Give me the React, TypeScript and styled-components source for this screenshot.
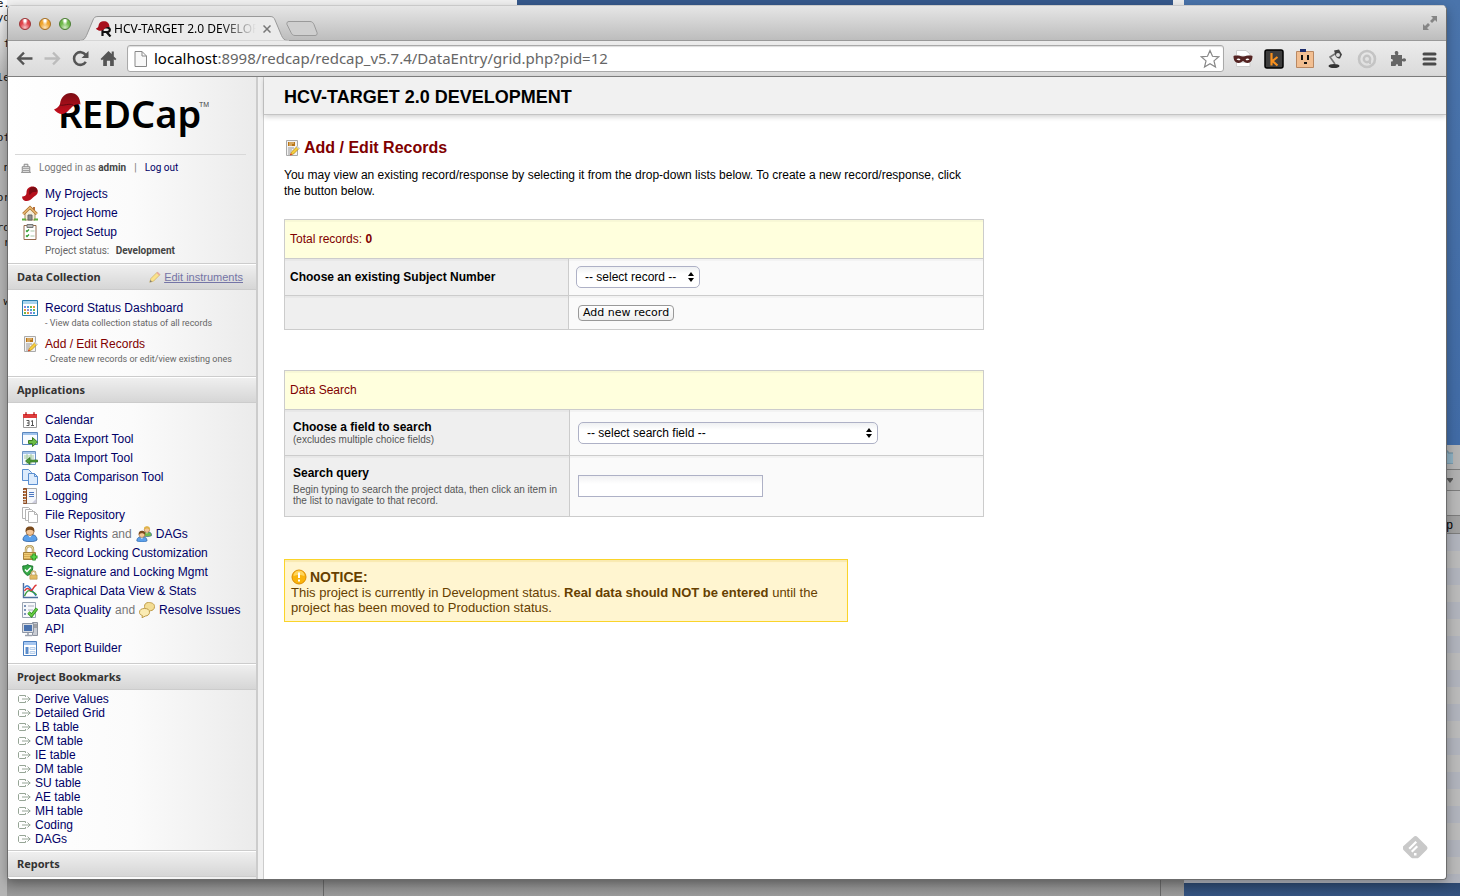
import React from 'react';
import styled, { createGlobalStyle } from 'styled-components';

const sans = '"Liberation Sans", Arial, sans-serif';
const humanist = '"Noto Sans", "Open Sans", sans-serif';
const narrow = 'Roboto, "Noto Sans", sans-serif';

const GlobalStyle = createGlobalStyle`
  * { box-sizing: border-box; }
  html, body { margin: 0; }
  body { font-family: ${sans}; font-size: 12px; color: #000; }
  a { color: #000066; text-decoration: none; }
  button, input, select { font: inherit; color: inherit; }
  svg { display: block; flex: none; }
`;

/* ---------- desktop behind the browser ---------- */

const Desktop = styled.div`
  position: relative;
  display: flex;
  min-height: 100vh;
  padding: 5px 13px 16px 7px;
  overflow: hidden;
  background: linear-gradient(#4a74ab, #3f69a4 60%, #3a6094 95%, #2a4468 98%, #34527f);
`;

const BackWindow = styled.div<{ $x: string; $y: string; $w: string; $h: string; $bg: string }>`
  position: absolute;
  left: ${p => p.$x};
  top: ${p => p.$y};
  width: ${p => p.$w};
  height: ${p => p.$h};
  background: ${p => p.$bg};
`;

const EditorScrap = styled.span<{ $y: number }>`
  position: absolute;
  right: -3px;
  top: ${p => p.$y}px;
  font: 11px/14px "DejaVu Sans Mono", monospace;
  color: #111;
`;

const FinderWindow = styled.div`
  position: absolute;
  right: 0;
  top: 445px;
  bottom: 13px;
  width: 276px;
  background: #a5a5a6;
  display: flex;
  flex-direction: column;
`;

const FinderBar = styled.div<{ $h: number; $bg: string }>`
  display: flex;
  align-items: center;
  justify-content: flex-end;
  height: ${p => p.$h}px;
  border-bottom: 1px solid #7c7c7c;
  background: ${p => p.$bg};
  font-size: 12px;
  padding-right: 7px;
`;

const FinderRows = styled.div`
  flex: 1;
  background: repeating-linear-gradient(#b0b3bc 0 17px, #bababa 17px 34px);
`;

/* ---------- browser window ---------- */

const Browser = styled.div`
  position: relative;
  flex: 1;
  display: flex;
  flex-direction: column;
  min-width: 0;
  border: 1px solid #6c6c6c;
  border-top-color: #c9c9c9;
  border-radius: 5px 5px 4px 4px;
  background: #fff;
  overflow: hidden;
`;

const WindowShadow = styled.div`
  position: absolute;
  inset: 5px 13px 17px 7px;
  border-radius: 5px;
  box-shadow: 0 4px 12px rgba(0, 0, 0, 0.3);
`;

const TitleBar = styled.div`
  display: flex;
  align-items: flex-end;
  height: 35px;
  border-bottom: 1px solid #999;
  background: linear-gradient(#e6e6e6, #bdbdbd);
`;

const Lights = styled.div`
  display: flex;
  gap: 8px;
  align-self: center;
  width: 72px;
  padding: 2px 0 0 11px;
`;

const Light = styled.button<{ $c: string; $edge: string }>`
  width: 12px;
  height: 12px;
  padding: 0;
  border: 1px solid ${p => p.$edge};
  border-radius: 50%;
  background: radial-gradient(ellipse at 50% 15%, #fff 0 12%, transparent 40%), radial-gradient(circle at 50% 85%, #ffffffb0, transparent 50%), ${p => p.$c};
`;

const Tab = styled.div`
  position: relative;
  display: flex;
  align-items: center;
  gap: 2px;
  width: 207px;
  height: 25px;
  margin: 0 -2px -1px 0;
  padding: 1px 16px 0 16px;
  > svg:first-child { position: absolute; left: 0; top: 0; }
  > * { position: relative; }
`;

const TabTitle = styled.span`
  flex: 1;
  overflow: hidden;
  white-space: nowrap;
  font: 12px/16px ${humanist};
  margin-right: 5px;
  mask-image: linear-gradient(to right, #000 75%, transparent);
`;

const PlainButton = styled.button`
  display: flex;
  align-items: center;
  justify-content: center;
  padding: 0;
  border: 0;
  background: none;
`;

const Push = styled.div`
  margin-left: auto;
  align-self: center;
  padding-right: 8px;
`;

const Toolbar = styled.div`
  display: flex;
  align-items: center;
  height: 36px;
  padding: 0 7px 0 8px;
  border-bottom: 1px solid #808080;
  background: linear-gradient(#ececec, #dadada);
`;

const NavButtons = styled.div`
  display: flex;
  gap: 11px;
  margin-right: 10px;
`;

const AddressBox = styled.div`
  flex: 1;
  display: flex;
  align-items: center;
  gap: 7px;
  height: 27px;
  padding: 0 3px 0 6px;
  border: 1px solid #a9a9a9;
  border-radius: 3px;
  background: #fff;
  box-shadow: inset 0 1px 1px #ddd;
`;

const AddressText = styled.div`
  flex: 1;
  padding-bottom: 2px;
  font: 15px/20px ${humanist};
  color: #666;
  strong { font-weight: 400; color: #000; }
`;

const Extensions = styled.div`
  display: flex;
  gap: 11px;
  margin-left: 9px;
`;

/* ---------- REDCap page ---------- */

const Page = styled.div`
  position: relative;
  flex: 1;
  display: flex;
  min-height: 0;
`;

const Sidebar = styled.nav`
  flex: none;
  width: 248px;
  background: linear-gradient(to right, #fff, #fbfbfb 50%, #ebebeb);
`;

const Divider = styled.div`
  flex: none;
  width: 8px;
  border: solid #ccc;
  border-width: 0 1px 0 2px;
  background: #f0f0f0;
`;

const Brand = styled.div`
  display: flex;
  justify-content: center;
  height: 78px;
  margin: 0 10px 0 7px;
  padding: 15px 0 0 3px;
  border-bottom: 1px solid #d8d8d8;
`;

const Login = styled.div`
  display: flex;
  align-items: center;
  gap: 8px;
  height: 29px;
  padding: 0 0 4px 13px;
  font: 10px/14px ${narrow};
  color: #777;
  b { color: #444; }
`;

const Menu = styled.ul<{ $top: number; $bottom: number }>`
  margin: 0;
  padding: ${p => p.$top}px 0 ${p => p.$bottom}px 14px;
  list-style: none;
`;

const MenuItem = styled.li`
  display: flex;
  align-items: center;
  gap: 4px;
  height: 19px;
  color: #777;
  white-space: nowrap;
  > svg:first-child { margin-right: 3px; }
`;

const ActiveLink = styled.a`
  color: #800000;
`;

const SubText = styled.li<{ $h: number }>`
  height: ${p => p.$h}px;
  padding-left: 23px;
  font: 9px/12px ${narrow};
  color: #666;
  white-space: nowrap;
`;

const Status = styled.li`
  height: 22px;
  padding: 4px 0 0 23px;
  font: 10px/12px ${narrow};
  color: #666;
  b { margin-left: 4px; color: #444; }
`;

const SectionHeader = styled.h2`
  display: flex;
  align-items: center;
  justify-content: space-between;
  height: 27px;
  margin: 0;
  padding: 0 13px 0 9px;
  border-top: 1px solid #ccc;
  border-bottom: 1px solid #ccc;
  background: linear-gradient(#f0f0f0, #d6d6d6);
  box-shadow: inset 0 1px 0 #fff;
  font: bold 11px/16px ${humanist};
  color: #333;
`;

const EditLink = styled.a`
  display: flex;
  align-items: center;
  gap: 3px;
  font: 11px/14px ${sans};
  color: #7474a6;
  span { text-decoration: underline; }
`;

const Bookmarks = styled.ul`
  margin: 0;
  padding: 2px 0 4px 10px;
  list-style: none;
`;

const Bookmark = styled.li`
  display: flex;
  align-items: center;
  gap: 4px;
  height: 14px;
`;

const Main = styled.main`
  flex: 1;
  min-width: 0;
`;

const ProjectHeader = styled.header`
  height: 38px;
  padding: 0 20px;
  border-bottom: 1px solid #c4c4c4;
  background: #f1f1f1;
  box-shadow: 0 2px 5px rgba(0, 0, 0, 0.18);
  h1 { margin: 0; font-size: 18px; line-height: 40px; }
`;

const Content = styled.div`
  max-width: 720px;
  padding: 23px 0 0 20px;
`;

const Title = styled.h2`
  display: flex;
  align-items: center;
  gap: 4px;
  margin: 0 0 10px;
  font-size: 16px;
  line-height: 19px;
  color: #800000;
`;

const Intro = styled.p`
  max-width: 690px;
  margin: 0 0 20px;
  line-height: 16px;
`;

const FormTable = styled.table<{ $gap: number; $pad: number }>`
  width: 100%;
  margin-bottom: ${p => p.$gap}px;
  border-collapse: collapse;
  table-layout: fixed;
  th, td {
    padding: 0 ${p => p.$pad}px;
    border: 1px solid #ccc;
    text-align: left;
    font-weight: 400;
    box-shadow: inset 0 2px 1px rgba(0, 0, 0, 0.03);
  }
  td { background: #fafafa; }
`;

const Row = styled.tr<{ $h: number }>`
  height: ${p => p.$h}px;
`;

const Caption = styled.th`
  && { padding-left: 5px; }
  background: #ffffdd;
  color: #800000;
`;

const LabelCell = styled.th<{ $pad?: number }>`
  && { padding-left: ${p => p.$pad ?? 5}px; }
  background: #efefef;
  label { display: block; font-weight: bold; }
`;

const Hint = styled.div<{ $gap?: number }>`
  margin-top: ${p => p.$gap ?? 0}px;
  font-size: 10px;
  line-height: 11px;
  color: #555;
`;

const SelectWrap = styled.div<{ $w: number }>`
  position: relative;
  width: ${p => p.$w}px;
  svg { position: absolute; right: 6px; top: 6px; pointer-events: none; }
`;

const Select = styled.select`
  display: block;
  appearance: none;
  width: 100%;
  height: 22px;
  padding: 0 8px;
  border: 1px solid #aeb1c6;
  border-radius: 5px;
  background: linear-gradient(#eef0f2, #fff 35%);
`;

const PushButton = styled.button`
  display: block;
  height: 16px;
  margin-left: 2px;
  padding: 0 4px;
  border: 1px solid #999;
  border-radius: 4px;
  background: linear-gradient(#fff, #eee);
  font: 11px/14px "DejaVu Sans", ${humanist};
`;

const SearchInput = styled.input`
  display: block;
  width: 185px;
  height: 22px;
  padding: 0 4px;
  border: 1px solid #aeb1c6;
  background: linear-gradient(#f1f1f3, #fff 40%);
`;

const Notice = styled.section`
  width: 564px;
  max-width: 100%;
  padding: 9px 6px 6px;
  border: 1px solid #fad42a;
  background: #fff5d0;
  box-shadow: inset 0 2px 1px #f9e9b0;
  font-size: 13px;
  line-height: 15px;
  color: #664000;
  h3 { display: flex; align-items: center; gap: 3px; margin: 0; font-size: 14px; line-height: 16px; }
  p { margin: 0; }
`;

const FeedlyBadge = styled.a`
  position: absolute;
  right: 18px;
  bottom: 20px;
`;

/* ---------- drawings ---------- */

const I = ({ children, size = 16, box = 16 }: { children: React.ReactNode; size?: number; box?: number }) => (
  <svg width={size} height={size} viewBox={`0 0 ${box} ${box}`} fill="none" aria-hidden="true">{children}</svg>
);

const Cap = () => (
  <I>
    <path d="M4.500 6.500C4.500 3 7 .5 10.500.5S16 3 15.700 6.500c-.3 2.500-2.700 3-4.700 5-1.700 2-4.500 4-7.500 3.500C1.500 14.700 0 13 .1 10.500c2.400 0 4.400-1 4.400-4z" fill="#b5101c" />
    <path d="M7 5.500c0-2.500 1.500-4.500 4-4.500 3 0 4.700 2 4.500 4.500-2 1-4.500-.5-6 1.500-.8 1-1.200 1.500-2 2C7 8 7 7 7 5.500z" fill="#7c0b13" />
  </I>
);
const Home = () => (
  <I>
    <path d="M3 8v7h10V8L8 3z" fill="#f4ecd8" stroke="#a88b5c" />
    <path d="M6 15v-5h4v5z" fill="#8d8d8d" stroke="#666" />
    <path d="M11 2h2v4h-2z" fill="#b9713a" />
    <path d="M1.200 9L8 2.500 14.800 9" stroke="#a8702c" strokeWidth="3" />
    <path d="M1.200 9L8 2.500 14.800 9" stroke="#e8b873" strokeWidth="1.600" />
    <path d="M0 14.500h4M12 14.500h4" stroke="#5cae3c" strokeWidth="2" />
  </I>
);
const Setup = () => (
  <I>
    <path d="M2 1.500h12v14H2z" fill="#fff" stroke="#94694c" />
    <path d="M5 .5h6v3H5z" fill="#bbb" stroke="#777" />
    <path d="M4 6.500l1 1 2-2M4 11.500l1 1 2-2" stroke="#2f9a2f" strokeWidth="1.300" />
    <path d="M8.500 7h4M8.500 12h4" stroke="#a7c6a7" />
  </I>
);
const Dashboard = () => (
  <I>
    <path d="M.5.500h15v15H.5z" fill="#fff" stroke="#2a7fb0" />
    <path d="M1 1h14v3H1z" fill="#a9d4ee" />
    {[6, 9, 12].map((y, r) => [2, 5, 8, 11].map((x, c) => (
      <path key={`${x}-${y}`} d={`M${x} ${y}h2v2h-2z`} fill={['#8f86d8', '#4a9fd8', '#74b74a', '#e8983e'][(r * 3 + c) % 4]} />
    )))}
  </I>
);
const EditRecord = () => (
  <I>
    <path d="M2.500.5h11v15h-11z" fill="#f3f3f3" stroke="#aaa" />
    <path d="M4 2h7v4H4z" fill="#b87418" />
    <path d="M5 3h5M5 5h3" stroke="#f3d7a0" />
    <path d="M4 8h6M4 10h4M4 12h3M4 14h2" stroke="#999" />
    <path d="M6.500 15l1-3L13 6.500 15 8.500 9.500 14z" fill="#f7cf3c" stroke="#b58a24" strokeWidth=".8" />
    <path d="M12.500 7l2 2 1-1.200L13.600 6z" fill="#cdd7e2" />
    <path d="M6 15.300l.6-2 1.500 1.400z" fill="#d32" />
  </I>
);
const Pencil = () => (
  <I size={12}>
    <path d="M1 15l1.500-5L11 1.500 14.500 5 6 13.500z" fill="#fbe28a" stroke="#c9b06a" />
    <path d="M10 2.500L13.500 6l1.500-1.500L11.500 1z" fill="#e7a9a0" />
    <path d="M1 15l1-3 2 2z" fill="#777" />
  </I>
);
const Calendar = () => (
  <I>
    <path d="M1.500 2.500h13v13h-13z" fill="#fff" stroke="#999" />
    <path d="M1 2h14v4H1z" fill="#dd3b3b" />
    <path d="M4 0v3M12 0v3" stroke="#a11" strokeWidth="1.400" />
    <path d="M4 0v1.500M12 0v1.500" stroke="#f6b0b0" />
    <path d="M4.500 8.500h2.500v2.500H5M7 11v2.500H4.500M9 9.500l1.500-1v5M9 13.500h3" stroke="#555" />
  </I>
);
const Export = () => (
  <I>
    <path d="M.5 1.500h15v12H.5z" fill="#f8fbff" stroke="#5a86bd" />
    <path d="M1 2h14v2H1z" fill="#9fc3ec" />
    <path d="M6.500 9.500h4v-3l5 4.500-5 4.500v-3h-4z" fill="#6cbd45" stroke="#3c7d22" />
  </I>
);
const Import = () => (
  <I>
    <path d="M.5 1.500h13v13H.5z" fill="#f3f8ff" stroke="#6f95c4" />
    <path d="M1 2h12v2H1z" fill="#a9c6ea" />
    <path d="M2 6h10M2 8h10M5 4v10M9 4v10" stroke="#a8cba0" />
    <path d="M15.500 10H8V7.500L3.500 11 8 14.500V12h7.500z" fill="#4f9e38" stroke="#2b6a1a" strokeWidth=".7" />
  </I>
);
const Compare = ({ grey = false }: { grey?: boolean }) => {
  const s = grey ? '#b4b4b4' : '#5b8fd0';
  const f = grey ? '#fff' : '#dcebfc';
  return (
    <I>
      {grey && <path d="M.5.500h6l2 2v9h-8z" fill={f} stroke={s} />}
      <path d={grey ? 'M3.500 2.500h6l2 2v9h-8z' : 'M.5.500h6l3 3v8h-9z'} fill={f} stroke={s} />
      <path d="M6.500 4.500h6l3 3v8h-9z" fill={f} stroke={s} />
      <path d="M12.500 4.500v3h3" stroke={s} />
    </I>
  );
};
const Logging = () => (
  <I>
    <path d="M3.500.5h11v15h-11z" fill="#f5f7fa" stroke="#aaa" />
    <path d="M1.500.5h3v15h-3z" fill="#b4703f" stroke="#8a4a22" />
    <path d="M1 2.500h3M1 5.500h3M1 8.500h3M1 11.500h3M1 14h3" stroke="#eee" />
    <path d="M7 4.500h5M7 6.500h5M7 8.500h5" stroke="#4c78c0" />
    <path d="M10 15l4.500-4.500V15z" fill="#ccd" />
  </I>
);
const Person = ({ x = 0, y = 0, s = 1, hair = '#7a4a1c', shirt = '#5ba0ea' }) => (
  <g transform={`translate(${x} ${y}) scale(${s})`}>
    <path d="M1 14c0-4 2.500-5.500 7-5.500s7 1.500 7 5.500c-2 2.200-12 2.200-14 0z" fill={shirt} stroke="#2a5c9c" strokeWidth=".8" />
    <path d="M6 9l2 2.500L10 9z" fill="#fff" />
    <circle cx="8" cy="5.500" r="4" fill="#f3c596" stroke="#8a5a2c" strokeWidth=".7" />
    <path d="M3.800 6C3 2 5 .5 8 .5S13 2 12.200 6C11 4.500 10 3.700 8 3.700S5 4.500 3.800 6z" fill={hair} />
  </g>
);
const User = () => <I><Person /></I>;
const Group = () => <I><Person x={5.5} s={0.68} hair="#e0b347" shirt="#72b84c" /><Person y={4.5} s={0.74} /></I>;
const Padlock = ({ x = 0, y = 0, s = 1 }) => (
  <g transform={`translate(${x} ${y}) scale(${s})`}>
    <path d="M4 8V4.500C4 0 11 0 11 4.500V8" stroke="#b0934f" strokeWidth="2.400" />
    <path d="M4 8V4.500C4 0 11 0 11 4.500V8" stroke="#f5e6b8" strokeWidth="1" />
    <path d="M1.500 7.500h12v7h-12z" fill="#f0cd75" stroke="#a5813c" />
    <path d="M2 9.500h11M2 11.500h11M2 13.500h11" stroke="#d0a24c" strokeWidth=".8" />
  </g>
);
const LockAdd = () => <I><Padlock /><path d="M12 8.500v7M8.500 12h7" stroke="#1b8d1b" strokeWidth="3.200" /><path d="M12 9.300v5.400M9.300 12h5.400" stroke="#5fd84b" strokeWidth="1.600" /></I>;
const ShieldLock = () => (
  <I>
    <path d="M.8 2C3 2 4.500 1.500 5.700.6 7 1.500 8.500 2 10.700 2c.3 4-1 7.500-5 9.500C1.800 9.500.5 6 .8 2z" fill="#35a846" stroke="#1d7430" />
    <path d="M3 5.500l2 2 3.800-4" stroke="#fff" strokeWidth="1.500" />
    <Padlock x={7} y={6.5} s={0.6} />
  </I>
);
const Graph = () => (
  <I>
    <path d="M1.500 0v14.500H16" stroke="#4d6f9e" strokeWidth="1.400" />
    <path d="M2.500 5C4 2 6 2 8 5s3 3 6 8" stroke="#3979d0" strokeWidth="1.400" />
    <path d="M2.500 13c2-5 4-6 6-5s4 1 6 4" stroke="#3b9a3f" strokeWidth="1.400" />
    <path d="M2.500 8C6 2 8 9 10 7s2-4 4.500-5" stroke="#dc3535" strokeWidth="1.400" />
  </I>
);
const Quality = () => (
  <I>
    <path d="M.5.500h13v15H.5z" fill="#f6f8fb" stroke="#9aa5b3" />
    <path d="M2 3h2v2H2zM2 7h2v2H2zM2 11h2v2H2z" fill="#7e95b8" />
    <path d="M6 4h6M6 8h5M6 12h2" stroke="#aab" />
    <path d="M6.500 10.500l3 3 5.500-7" stroke="#2d8d1e" strokeWidth="3.200" />
    <path d="M6.500 10.500l3 3 5.500-7" stroke="#66cc44" strokeWidth="1.800" />
  </I>
);
const Balloons = () => (
  <I>
    <path d="M9.500.5c3 0 6 1 6 4s-2 4-4 4.200L8 11l.5-2.500C6 8 5.500 6 5.500 4.500c0-2.500 1.500-4 4-4z" fill="#f3dd94" stroke="#bf9c49" />
    <path d="M5.500 6.500c3 0 5 1 5 3.700 0 2.500-2 3.600-4 3.800L3 15.700l.4-2.200C1.500 13 .5 12 .5 10.300c0-2.600 2-3.800 5-3.800z" fill="#fbecb4" stroke="#bf9c49" />
  </I>
);
const Computer = () => (
  <I>
    <path d="M10.500 1.500h5v13h-5z" fill="#c9ccd3" stroke="#8c929e" />
    <path d="M12 4h3M12 6h3" stroke="#777" />
    <path d="M.5 2.500h11v9H.5z" fill="#d9dce2" stroke="#8d96a5" />
    <path d="M2 4h8v6H2z" fill="#4a72ae" />
    <path d="M3 14.500h7M6 12v2" stroke="#9ca2ae" strokeWidth="1.600" />
  </I>
);
const Report = () => (
  <I>
    <path d="M1.500 1.500h13v14h-13z" fill="#fff" stroke="#4b7fc0" />
    <path d="M2 2h12v3H2z" fill="#a5c6f0" />
    <path d="M3.500 7h3v7h-3z" fill="#5b8cca" />
    <path d="M8 7.500h5v2H8zM8 11.500h5v2H8z" fill="#eaf2fc" stroke="#b8cfea" />
  </I>
);
const Building = () => (
  <I size={10}>
    <path d="M2 6h12v9H2zM5 6V2h6v4" stroke="#888" strokeWidth="1.600" fill="#eee" />
    <path d="M3 9h10M3 12h10M0 15h16" stroke="#999" strokeWidth="1.500" />
  </I>
);
const LinkOut = () => (
  <svg width="13" height="8" viewBox="0 0 13 8" fill="none" aria-hidden="true">
    <path d="M7.500 2V.5h-6l-1 1v5l1 1h6V6M4 4h8.500M9.500 1.500L12 4 9.500 6.500" stroke="#96a596" />
  </svg>
);
const Warning = () => (
  <I>
    <circle cx="8" cy="8" r="7" fill="#f9b40c" stroke="#dd8c00" />
    <path d="M2.500 7a5.500 5.500 0 0 1 11 0c-3-1.500-8-1.500-11 0z" fill="#ffd65c" />
    <path d="M8 3.500v5.500M8 10.500v2" stroke="#fff" strokeWidth="2" />
  </I>
);
const Arrows = () => (
  <svg width="6" height="10" viewBox="0 0 6 10" aria-hidden="true"><path d="M0 4l3-4 3 4zM0 6l3 4 3-4z" fill="#000" /></svg>
);

const RedcapLogo = () => (
  <svg width="156" height="48" viewBox="0 0 156 48" role="img" aria-label="REDCap">
    <defs>
      <linearGradient id="capFill" x1="0" y1="0" x2="0" y2="1"><stop offset="0" stopColor="#7a0d14" /><stop offset="1" stopColor="#c80f1e" /></linearGradient>
    </defs>
    <text x="4" y="36" fontFamily="Noto Sans, sans-serif" fontWeight="600" fontSize="38">R</text>
    <text x="28" y="36" fontFamily="Noto Sans, sans-serif" fontWeight="600" fontSize="38">EDCap</text>
    <path d="M6 12C7 5 11 1 17 1c5.500 0 9 4 9.500 11.500-3-.5-6 0-8.500 2.500-3 3-6 7-10 7-3 0-6-2-8-4.500 3-1 5-3 6-5.500z" fill="url(#capFill)" />
    <path d="M6 13c4 1 9-2 13 0" stroke="#600910" fill="none" />
    <text x="145" y="15" fontFamily="Liberation Sans, sans-serif" fontSize="7" fill="#444">TM</text>
  </svg>
);

const Favicon = () => (
  <I>
    <path d="M6.500 6v9M6.500 6.500H11c4 0 3.500 4.500 0 4.500H7.500M10.500 11l4 4.500" stroke="#111" strokeWidth="2.200" />
    <path d="M2.500 5C3 1.500 5 .3 8 .3s5.500 2 5.500 5.700C11 6 9.500 6.500 8.500 8 6.500 9.800 4 10 2.500 9.500 1.500 9 .5 8.500 0 7.500 1 7 2.200 6.500 2.500 5z" fill="#a80f1c" />
  </I>
);

const TabShape = () => (
  <svg width="209" height="25" viewBox="0 0 209 25" aria-hidden="true">
    <path d="M0 24.500c4 0 5-2 6.500-5L13 4c1-2.500 2-3.500 5-3.500h172c3 0 4 1 5 3.500l6.500 15.500c1.500 3 2.500 5 6.500 5" fill="#ebebeb" stroke="#999" />
    <path d="M0 25h209" stroke="#ebebeb" strokeWidth="1" />
  </svg>
);

const Back = () => <I size={17}><path d="M15.500 8H2M7.500 2.500L2 8l5.500 5.500" stroke="#555" strokeWidth="2.200" /></I>;
const Forward = () => <I size={17}><path d="M.5 8H14M8.500 2.500L14 8l-5.500 5.500" stroke="#bcbcbc" strokeWidth="2.200" /></I>;
const Reload = () => <I size={17}><path d="M13 11.200A6 6 0 1 1 12.800 4.500" stroke="#555" strokeWidth="2.400" /><path d="M15.500 1v6.500H9z" fill="#555" /></I>;
const HomeNav = () => <I size={17}><path d="M8 1L.5 8.500 1.800 9.700 3 8.700V15h3.500v-5h3v5H13V8.700l1.200 1L15.500 8.500 13 6V1.500h-2v2.300z" fill="#555" /></I>;
const PageIcon = () => <svg width="13" height="16" viewBox="0 0 13 16" aria-hidden="true"><path d="M1 .5h7l4.500 4.500v10.500H1zM8 .5V5h4.500" fill="#f8f8f8" stroke="#888" /></svg>;
const Star = () => <I size={20} box={20}><path d="M10 1.500l2.500 5.800 6.300.5-4.800 4.100 1.500 6.200L10 14.800l-5.500 3.300L6 11.900 1.200 7.800l6.300-.5z" fill="#fff" stroke="#888" strokeWidth="1.200" /></I>;

const extensions: [string, React.ReactNode][] = [
  ['Incognito filter', <I size={20} box={20}>
    <path d="M3.500 6V1.500H13L17 5v2M3.500 14v3.500H17V14" fill="#fff" stroke="#ccc" />
    <path d="M.5 7c3-1 6 0 9.500.5C13.500 7 16.500 6 19.500 7c0 4-1.500 7-5 7-2 0-3.500-1.500-4.500-2-1 .5-2.500 2-4.500 2-3.500 0-5-3-5-7z" fill="#542322" />
    <path d="M3.500 10.300c1.500-1.300 3-1 4 .4-1.200 1-3 .8-4-.4zM12.500 10.700c1-1.400 2.500-1.700 4-.4-1 1.200-2.800 1.400-4 .4z" fill="#fff" />
  </I>],
  ['Klout', <I size={20} box={20}>
    <rect x="1" y="1" width="18" height="18" rx="2" fill="#3d3d3d" stroke="#000" strokeWidth="1.500" />
    <path d="M7.500 4v12.500M13.500 8l-5 4 5 4.500" stroke="#f7901e" strokeWidth="2.200" />
  </I>],
  ['Box face', <I size={20} box={20}>
    <path d="M1.500 2.500h17v16h-17z" fill="#f2bf92" stroke="#b98862" />
    <path d="M5 0h6v3H5z" fill="#1c2c6b" />
    <path d="M6 6h2v5H6zM12 6h2v5h-2zM9 13h3v2H9z" fill="#111" />
  </I>],
  ['Desk lamp', <I size={20} box={20}>
    <path d="M12 3L4 8l5 7" stroke="#777" strokeWidth="1.600" />
    <path d="M8 1.500l5-1 3 5-2 4c-3 0-5-2-5-5z" fill="#444" />
    <circle cx="12" cy="6" r="2" fill="#ddd" />
    <ellipse cx="8" cy="17" rx="5.500" ry="2" fill="#333" />
  </I>],
  ['Tracker', <I size={20} box={20}>
    <circle cx="10" cy="10" r="8" stroke="#c4c4c4" strokeWidth="2.600" />
    <circle cx="10" cy="10" r="3.200" stroke="#c4c4c4" strokeWidth="2.400" />
    <path d="M13 10v5" stroke="#c4c4c4" strokeWidth="2" />
  </I>],
  ['Extension', <I size={20} box={20}>
    <path d="M3 6h4.500C6 3 7 2 8.500 2S11 3 10 6h4v4c2.500-1.500 4-.5 4 1s-1.500 2-4 1v5h-4c1-2.500-3-2.500-2.200 0H3v-4.500c2.500.8 2.500-3 0-2.500z" fill="#666" />
  </I>],
  ['Menu', <I size={20} box={20}>
    <path d="M5 5h11M5 10h11M5 15h11" stroke="#4a4a4a" strokeWidth="3" strokeLinecap="round" />
  </I>],
];

const scraps: [string, number][] = [['e.', -3], ['yo', 11], ['f', 37], ['le', 71], ['of', 131], ['n', 161], ['or', 191], ['rd', 221], ['r', 236], ['w', 295]];

const bookmarks = ['Derive Values', 'Detailed Grid', 'LB table', 'CM table', 'IE table', 'DM table', 'SU table', 'AE table', 'MH table', 'Coding', 'DAGs'];

export default function App() {
  return (
    <>
      <GlobalStyle />
      <Desktop>
        <BackWindow $x="0" $y="0" $w="517px" $h="100%" $bg="#8c8c8c" />
        <BackWindow $x="0" $y="0" $w="517px" $h="30px" $bg="#f2f2f2" />
        <BackWindow $x="517px" $y="0" $w="656px" $h="30px" $bg="#36598c" />
        <BackWindow $x="1173px" $y="0" $w="11px" $h="30px" $bg="#eee" />
        <FinderWindow>
          <FinderBar $h={25} $bg="#b4b4b4"><svg width="10" height="14" viewBox="0 0 10 14"><path d="M0 1h5v2h9v11H0z" fill="#8eb0c2" stroke="#64889c" /></svg></FinderBar>
          <FinderBar $h={21} $bg="#b0b0b0"><svg width="12" height="8" viewBox="0 0 12 8"><path d="M5 2h8l-4 5zM0 3h4v3H0z" fill="#555" /></svg></FinderBar>
          <FinderBar $h={25} $bg="#b8b8b8" />
          <FinderBar $h={18} $bg="#a0a0a0">p</FinderBar>
          <FinderRows />
        </FinderWindow>
        <BackWindow $x="0" $y="calc(100% - 17px)" $w="323px" $h="17px" $bg="linear-gradient(#838383, #999)" />
        <BackWindow $x="0" $y="0" $w="7px" $h="100%" $bg="linear-gradient(#fff, #b4b4b4 80px)">
          {scraps.map(([t, y]) => <EditorScrap key={y} $y={y}>{t}</EditorScrap>)}
        </BackWindow>
        <BackWindow $x="323px" $y="calc(100% - 17px)" $w="861px" $h="17px" $bg="linear-gradient(to right, #666 1px, transparent 1px 837px, #666 837px 838px, transparent 838px), linear-gradient(#838383, #999)" />
        <WindowShadow />

        <Browser>
          <TitleBar>
            <Lights>
              <Light aria-label="Close" $c="#e0434a" $edge="#9a3a3c" />
              <Light aria-label="Minimize" $c="#f0a52c" $edge="#a3702a" />
              <Light aria-label="Zoom" $c="#6fb94a" $edge="#4d7d38" />
            </Lights>
            <Tab>
              <TabShape />
              <Favicon />
              <TabTitle>HCV-TARGET 2.0 DEVELOPMENT</TabTitle>
              <PlainButton aria-label="Close tab"><I size={8} box={8}><path d="M.5.500l7 7M7.500.5l-7 7" stroke="#777" strokeWidth="1.500" /></I></PlainButton>
            </Tab>
            <PlainButton aria-label="New tab">
              <svg width="34" height="22" viewBox="0 0 34 22"><path d="M4 3.500h21c2 0 3 1 4 3l3 8c.6 2-.5 3-2 3H10c-2 0-3-1-4-3l-4-8c-.6-2 .5-3 2-3z" fill="#cfcfcf" stroke="#9a9a9a" /></svg>
            </PlainButton>
            <Push>
              <PlainButton aria-label="Full screen"><I size={16}><path d="M9 1h6v6l-2-2-3 3-2-2 3-3zM7 15H1V9l2 2 3-3 2 2-3 3z" fill="#858585" /></I></PlainButton>
            </Push>
          </TitleBar>
          <Toolbar>
            <NavButtons>
              <PlainButton aria-label="Back"><Back /></PlainButton>
              <PlainButton aria-label="Forward"><Forward /></PlainButton>
              <PlainButton aria-label="Reload"><Reload /></PlainButton>
              <PlainButton aria-label="Home"><HomeNav /></PlainButton>
            </NavButtons>
            <AddressBox>
              <PageIcon />
              <AddressText role="textbox" aria-label="Address"><strong>localhost</strong>:8998/redcap/redcap_v5.7.4/DataEntry/grid.php?pid=12</AddressText>
              <PlainButton aria-label="Bookmark this page"><Star /></PlainButton>
            </AddressBox>
            <Extensions>
              {extensions.map(([name, icon]) => <PlainButton key={name} aria-label={name}>{icon}</PlainButton>)}
            </Extensions>
          </Toolbar>

          <Page>
            <Sidebar>
              <Brand><RedcapLogo /></Brand>
              <Login><Building /><span>Logged in as <b>admin</b></span><span>|</span><a href="#logout">Log out</a></Login>
              <Menu $top={0} $bottom={0}>
                <MenuItem><Cap /><a href="#projects">My Projects</a></MenuItem>
                <MenuItem><Home /><a href="#home">Project Home</a></MenuItem>
                <MenuItem><Setup /><a href="#setup">Project Setup</a></MenuItem>
                <Status>Project status: <b>Development</b></Status>
              </Menu>
              <SectionHeader>Data Collection<EditLink href="#instruments"><Pencil /><span>Edit instruments</span></EditLink></SectionHeader>
              <Menu $top={8} $bottom={3}>
                <MenuItem><Dashboard /><a href="#dashboard">Record Status Dashboard</a></MenuItem>
                <SubText $h={17}>- View data collection status of all records</SubText>
                <MenuItem><EditRecord /><ActiveLink href="#records">Add / Edit Records</ActiveLink></MenuItem>
                <SubText $h={20}>- Create new records or edit/view existing ones</SubText>
              </Menu>
              <SectionHeader>Applications</SectionHeader>
              <Menu $top={7} $bottom={6}>
                <MenuItem><Calendar /><a href="#calendar">Calendar</a></MenuItem>
                <MenuItem><Export /><a href="#export">Data Export Tool</a></MenuItem>
                <MenuItem><Import /><a href="#import">Data Import Tool</a></MenuItem>
                <MenuItem><Compare /><a href="#compare">Data Comparison Tool</a></MenuItem>
                <MenuItem><Logging /><a href="#logging">Logging</a></MenuItem>
                <MenuItem><Compare grey /><a href="#files">File Repository</a></MenuItem>
                <MenuItem><User /><a href="#rights">User Rights</a> and <Group /><a href="#dags">DAGs</a></MenuItem>
                <MenuItem><LockAdd /><a href="#locking">Record Locking Customization</a></MenuItem>
                <MenuItem><ShieldLock /><a href="#esign">E-signature and Locking Mgmt</a></MenuItem>
                <MenuItem><Graph /><a href="#stats">Graphical Data View &amp; Stats</a></MenuItem>
                <MenuItem><Quality /><a href="#quality">Data Quality</a> and <Balloons /><a href="#resolve">Resolve Issues</a></MenuItem>
                <MenuItem><Computer /><a href="#api">API</a></MenuItem>
                <MenuItem><Report /><a href="#report">Report Builder</a></MenuItem>
              </Menu>
              <SectionHeader>Project Bookmarks</SectionHeader>
              <Bookmarks>
                {bookmarks.map(b => <Bookmark key={b}><LinkOut /><a href="#bookmark">{b}</a></Bookmark>)}
              </Bookmarks>
              <SectionHeader>Reports</SectionHeader>
            </Sidebar>
            <Divider />
            <Main>
              <ProjectHeader><h1>HCV-TARGET 2.0 DEVELOPMENT</h1></ProjectHeader>
              <Content>
                <Title><EditRecord />Add / Edit Records</Title>
                <Intro>You may view an existing record/response by selecting it from the drop-down lists below. To create a new record/response, click the button below.</Intro>
                <FormTable $gap={40} $pad={7}>
                  <colgroup><col width="284" /><col /></colgroup>
                  <tbody>
                    <Row $h={39}><Caption colSpan={2}>Total records: <b>0</b></Caption></Row>
                    <Row $h={37}>
                      <LabelCell><label htmlFor="record">Choose an existing Subject Number</label></LabelCell>
                      <td><SelectWrap $w={124}><Select id="record"><option>-- select record --</option></Select><Arrows /></SelectWrap></td>
                    </Row>
                    <Row $h={34}><LabelCell /><td><PushButton>Add new record</PushButton></td></Row>
                  </tbody>
                </FormTable>
                <FormTable $gap={42} $pad={8}>
                  <colgroup><col width="285" /><col /></colgroup>
                  <tbody>
                    <Row $h={39}><Caption colSpan={2}>Data Search</Caption></Row>
                    <Row $h={46}>
                      <LabelCell $pad={8}><label htmlFor="field">Choose a field to search</label><Hint>(excludes multiple choice fields)</Hint></LabelCell>
                      <td><SelectWrap $w={300}><Select id="field"><option>-- select search field --</option></Select><Arrows /></SelectWrap></td>
                    </Row>
                    <Row $h={61}>
                      <LabelCell $pad={8}><label htmlFor="query">Search query</label><Hint $gap={4}>Begin typing to search the project data, then click an item in the list to navigate to that record.</Hint></LabelCell>
                      <td><SearchInput id="query" type="text" /></td>
                    </Row>
                  </tbody>
                </FormTable>
                <Notice>
                  <h3><Warning />NOTICE:</h3>
                  <p>This project is currently in Development status. <b>Real data should NOT be entered</b> until the project has been moved to Production status.</p>
                </Notice>
              </Content>
            </Main>
            <FeedlyBadge href="#feedly" aria-label="Feedly">
              <svg width="25" height="23" viewBox="0 0 25 23" fill="none">
                <path d="M10.500 1c1.200-1.200 2.800-1.200 4 0l9 9c1.300 1.200 1.300 2.600 0 4l-7 7c-1 1-1.500 1.200-2.500 1.200h-4c-1 0-1.700-.3-2.500-1.200l-7-7c-1.300-1.400-1.300-2.800 0-4z" fill="#c9c9c9" />
                <path d="M7 12l5.500-5.500M9.500 15l4-4" stroke="#fff" strokeWidth="2.200" strokeLinecap="square" />
                <path d="M11 17h2.500v2.500H11z" fill="#fff" />
              </svg>
            </FeedlyBadge>
          </Page>
        </Browser>
      </Desktop>
    </>
  );
}
